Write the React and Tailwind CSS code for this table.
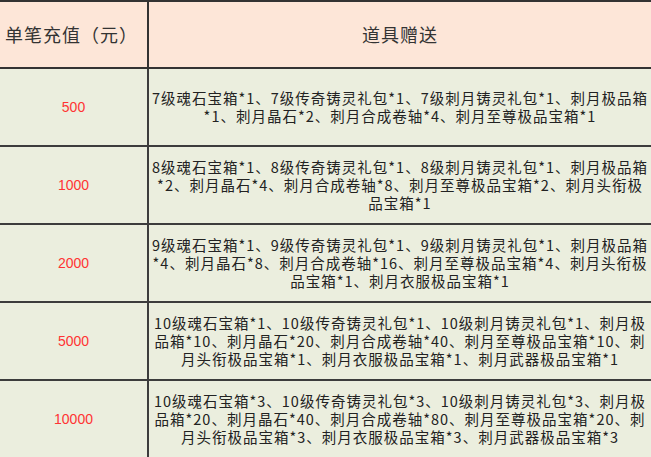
import React from "react";

const rows = [
  {
    amount: "500",
    lines: [
      "7级魂石宝箱*1、7级传奇铸灵礼包*1、7级刺月铸灵礼包*1、刺月极品箱",
      "*1、刺月晶石*2、刺月合成卷轴*4、刺月至尊极品宝箱*1",
    ],
  },
  {
    amount: "1000",
    lines: [
      "8级魂石宝箱*1、8级传奇铸灵礼包*1、8级刺月铸灵礼包*1、刺月极品箱",
      "*2、刺月晶石*4、刺月合成卷轴*8、刺月至尊极品宝箱*2、刺月头衔极",
      "品宝箱*1",
    ],
  },
  {
    amount: "2000",
    lines: [
      "9级魂石宝箱*1、9级传奇铸灵礼包*1、9级刺月铸灵礼包*1、刺月极品箱",
      "*4、刺月晶石*8、刺月合成卷轴*16、刺月至尊极品宝箱*4、刺月头衔极",
      "品宝箱*1、刺月衣服极品宝箱*1",
    ],
  },
  {
    amount: "5000",
    lines: [
      "10级魂石宝箱*1、10级传奇铸灵礼包*1、10级刺月铸灵礼包*1、刺月极",
      "品箱*10、刺月晶石*20、刺月合成卷轴*40、刺月至尊极品宝箱*10、刺",
      "月头衔极品宝箱*1、刺月衣服极品宝箱*1、刺月武器极品宝箱*1",
    ],
  },
  {
    amount: "10000",
    lines: [
      "10级魂石宝箱*3、10级传奇铸灵礼包*3、10级刺月铸灵礼包*3、刺月极",
      "品箱*20、刺月晶石*40、刺月合成卷轴*80、刺月至尊极品宝箱*20、刺",
      "月头衔极品宝箱*3、刺月衣服极品宝箱*3、刺月武器极品宝箱*3",
    ],
  },
];

const cjk = "font-['SimSun','Noto_Sans_CJK_SC',sans-serif]";

export default function App() {
  return (
    <div className="w-[651px] h-[457px] bg-[#ebeede] overflow-hidden">
      <table className="w-[651px] border-collapse table-fixed">
        <colgroup>
          <col className="w-[148px]" />
          <col />
        </colgroup>
        <thead>
          <tr className="h-[67px] bg-[#fde6d8]">
            <th
              className={`border-t-2 border-r-2 border-b-2 border-[#333] text-left pl-[5px] font-normal text-[18px] tracking-[1px] text-[#333] ${cjk}`}
            >
              单笔充值（元）
            </th>
            <th
              className={`border-t-2 border-b-2 border-[#333] font-normal text-[18px] tracking-[1px] text-[#333] ${cjk}`}
            >
              道具赠送
            </th>
          </tr>
        </thead>
        <tbody>
          {rows.map((r) => (
            <tr key={r.amount} className="h-[78px]">
              <td className="border-r-2 border-b-2 border-[#3c3c3c] text-center text-[14px] text-[#ff3333] font-['Liberation_Sans',sans-serif]">
                {r.amount}
              </td>
              <td
                className={`border-b-2 border-[#3c3c3c] text-center text-[14.5px] leading-[18px] tracking-[1px] text-[#222] ${cjk}`}
              >
                {r.lines.map((l, i) => (
                  <div key={i} className="whitespace-nowrap">
                    {l}
                  </div>
                ))}
              </td>
            </tr>
          ))}
        </tbody>
      </table>
    </div>
  );
}
